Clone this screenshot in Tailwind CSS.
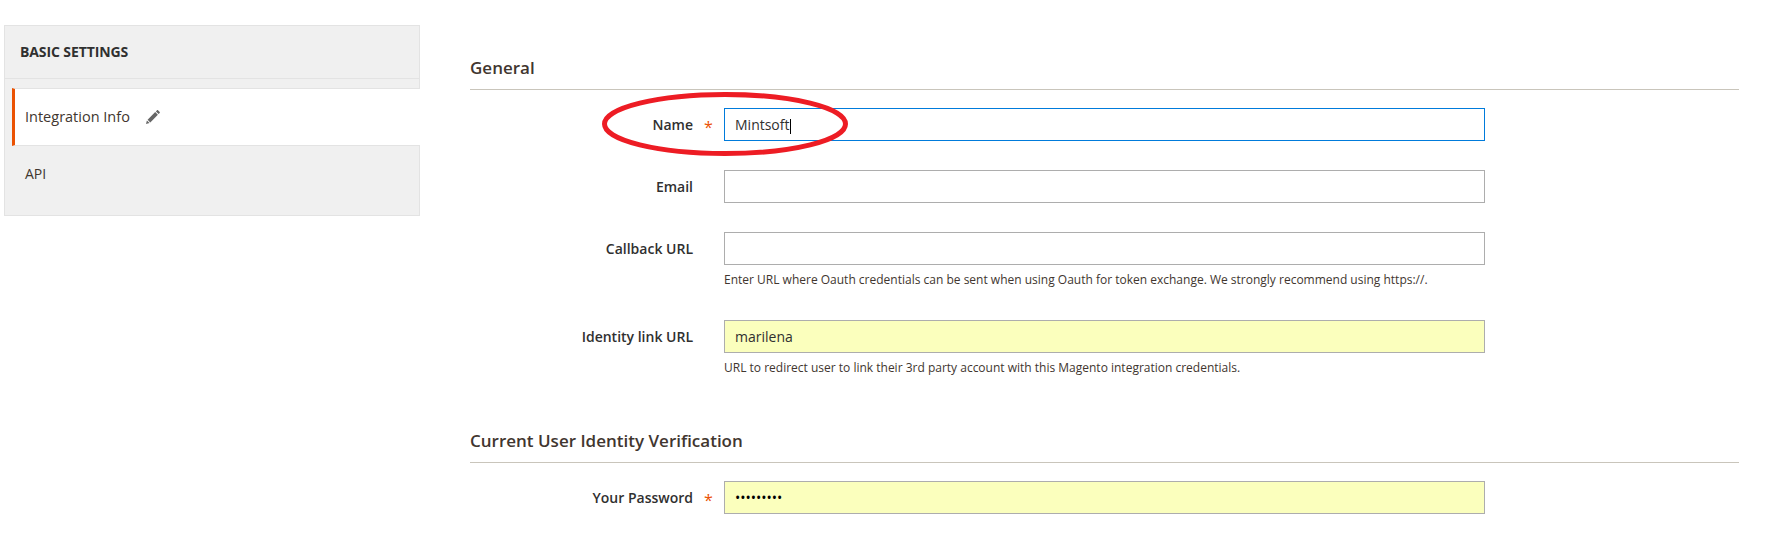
<!DOCTYPE html>
<html lang="en">
<head>
    <meta charset="UTF-8">
    <title>Integration Info</title>
    <script src="https://cdn.jsdelivr.net/npm/@tailwindcss/browser@4"></script>
</head>
<body class="bg-white font-['Open_Sans',sans-serif] text-[#303030] overflow-hidden">
    <div class="flex h-[536px] w-[1774px] items-start">
        <!-- Sidebar -->
        <aside class="ml-[4px] mt-[25px] w-[416px] h-[191px] bg-[#f0f0f0] border border-[#e3e3e3]">
            <div class="h-[53px] pl-[15px] pb-[2px] flex items-center border-b border-[#e3e3e3] text-[14px] tracking-[-0.1px] font-bold text-[#303030]">BASIC SETTINGS</div>
            <div class="mt-[9px] ml-[7px] -mr-px h-[58px] bg-white border-y border-[#e3e3e3] border-l-[3px] border-l-[#eb5202] pl-[10px] flex items-center text-[14.5px] text-[#41362f]">
                <span>Integration Info</span>
                <svg class="ml-[16px] w-[14px] h-[14px]" viewBox="0 0 14 14" fill="#666"><path d="M0 14l.9-3.6 2.7 2.7zM1.6 9.7l7.6-7.6 2.7 2.7-7.6 7.6zM9.9 1.4 11 .3c.3-.3.7-.3 1 0l1.7 1.7c.3.3.3.7 0 1l-1.1 1.1z"/></svg>
            </div>
            <div class="h-[58px] pl-[20px] pt-[13px] text-[14px] leading-[30px] text-[#41362f]">API</div>
        </aside>

        <!-- Form -->
        <main class="relative ml-[50px] w-[1269px]">
            <section class="pt-[54px]">
                <h2 class="h-[36px] leading-[28px] text-[17px] font-semibold text-[#41362f] border-b border-[#c9c5bb]">General</h2>
                <div class="mt-[18px] flex">
                    <label class="w-[223px] text-right text-[14px] font-semibold leading-[33px] text-[#303030]">Name</label>
                    <span class="w-[31px] h-[33px] pl-[11px] text-[#eb5202] text-[16px] leading-[38px]">*</span>
                    <input class="w-[761px] h-[33px] px-[10px] text-[14px] text-[#303030] bg-white border border-[#007bdb] outline-none" type="text" value="Mintsoft">
                </div>
                <div class="mt-[29px] flex">
                    <label class="w-[223px] text-right text-[14px] font-semibold leading-[33px] text-[#303030]">Email</label>
                    <span class="w-[31px]"></span>
                    <input class="w-[761px] h-[33px] px-[10px] text-[14px] bg-white border border-[#adadad] outline-none" type="text">
                </div>
                <div class="mt-[29px] flex">
                    <label class="w-[223px] text-right text-[14px] font-semibold leading-[33px] text-[#303030]">Callback URL</label>
                    <span class="w-[31px]"></span>
                    <div class="w-[761px]">
                        <input class="block w-full h-[33px] px-[10px] text-[14px] bg-white border border-[#adadad] outline-none" type="text">
                        <p class="mt-[6px] text-[12px] leading-[18px] text-[#41362f] whitespace-nowrap">Enter URL where Oauth credentials can be sent when using Oauth for token exchange. We strongly recommend using https://.</p>
                    </div>
                </div>
                <div class="mt-[31px] flex">
                    <label class="w-[223px] text-right text-[14px] font-semibold leading-[33px] text-[#303030]">Identity link URL</label>
                    <span class="w-[31px]"></span>
                    <div class="w-[761px]">
                        <input class="block w-full h-[33px] px-[10px] text-[14px] text-[#303030] bg-[#fbffbd] border border-[#adadad] outline-none" type="text" value="marilena">
                        <p class="mt-[6px] text-[12px] leading-[18px] text-[#41362f] whitespace-nowrap">URL to redirect user to link their 3rd party account with this Magento integration credentials.</p>
                    </div>
                </div>
            </section>
            <section class="mt-[50px]">
                <h2 class="h-[36px] leading-[28px] text-[17px] font-semibold text-[#41362f] border-b border-[#c9c5bb]">Current User Identity Verification</h2>
                <div class="mt-[18px] flex">
                    <label class="w-[223px] text-right text-[14px] font-semibold leading-[33px] text-[#303030]">Your Password</label>
                    <span class="w-[31px] h-[33px] pl-[11px] text-[#eb5202] text-[16px] leading-[38px]">*</span>
                    <input class="w-[761px] h-[33px] px-[10px] text-[14px] text-black bg-[#fbffbd] border border-[#adadad] outline-none" type="password" value="marilena1">
                </div>
            </section>

            <!-- text caret and hand-drawn ellipse over the Name field -->
            <span class="absolute left-[320px] top-[119px] w-px h-[15px] bg-black"></span>
            <svg class="absolute left-[132px] top-[92px] w-[246px] h-[64px] pointer-events-none" viewBox="0 0 246 64" fill="none">
                <ellipse cx="123" cy="32" rx="120.5" ry="29.5" stroke="#ed1c24" stroke-width="5"/>
            </svg>
        </main>
    </div>
</body>
</html>
